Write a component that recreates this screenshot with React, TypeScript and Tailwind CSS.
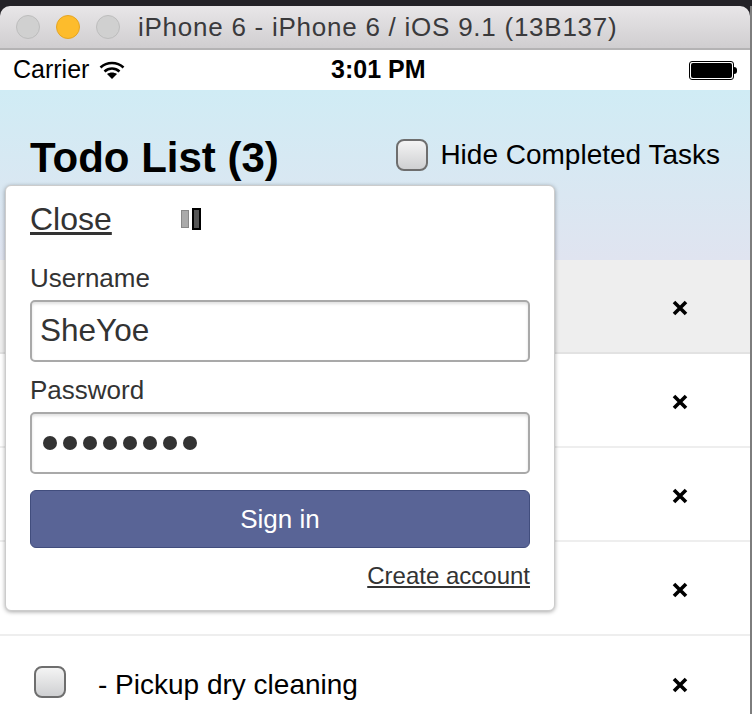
import React from 'react';

const Check: React.FC<{ className?: string }> = ({ className }) => (
  <span className={`block w-8 h-8 rounded-lg border-2 border-[#6e6e6e] bg-gradient-to-b from-[#f4f4f4] to-[#cfd0d2] ${className ?? ''}`} />
);

const Cross: React.FC = () => (
  <svg width="16" height="16" viewBox="0 0 16 16" className="block">
    <path d="M2 2 L14 14 M14 2 L2 14" stroke="#000" strokeWidth="3.6" fill="none" />
  </svg>
);

const Row: React.FC<{ label?: string; className?: string }> = ({ label, className }) => (
  <div className={`h-[94px] flex items-center border-b-2 border-[#eeeeee] ${className ?? ''}`}>
    <div className="pl-[34px] w-[98px] shrink-0">
      <Check className="-mt-[2px]" />
    </div>
    <div className="flex-1 mt-[4px] text-[28px] text-black">{label}</div>
    <div className="w-[140px] mt-[4px] flex justify-center shrink-0">
      <Cross />
    </div>
  </div>
);

const Field: React.FC<{ label: string; children: React.ReactNode }> = ({ label, children }) => (
  <div>
    <div className="text-[26px] leading-[28px] text-[#333333]">{label}</div>
    <div className="mt-[8px] h-[62px] rounded-[5px] border-2 border-[#a9a9a9] bg-white shadow-[inset_0_2px_3px_rgba(0,0,0,0.12)] flex items-center pl-[8px] text-[#333333]">
      {children}
    </div>
  </div>
);

export default function App() {
  return (
    <div className="relative w-[752px] h-[714px] overflow-hidden bg-[#7d7d7d] font-['Liberation_Sans',Arial,sans-serif]">
      <div className="h-[6px] bg-[#232227]" />
      <div className="w-[750px]">
        {/* title bar */}
        <div className="bg-[#232227]">
          <div className="h-[44px] rounded-t-[10px] bg-gradient-to-b from-[#e8e6e8] to-[#d0ced0] border-b-2 border-[#b4b3b4] flex items-center pl-4">
            <span className="w-6 h-6 rounded-full bg-[#d0d0d0] border border-[#bdbdbd]" />
            <span className="ml-4 w-6 h-6 rounded-full bg-[#fdbc2c] border border-[#e5a524]" />
            <span className="ml-4 w-6 h-6 rounded-full bg-[#d0d0d0] border border-[#bdbdbd]" />
            <span className="ml-[18px] text-[26px] tracking-[0.75px] text-[#3a3a3c]">iPhone 6 - iPhone 6 / iOS 9.1 (13B137)</span>
          </div>
        </div>

        {/* status bar */}
        <div className="relative h-[40px] bg-white flex items-center pl-[13px]">
          <span className="text-[25px] text-black">Carrier</span>
          <svg width="26" height="20" viewBox="0 0 26 20" className="ml-[10px]">
            <path d="M1.5 7.5 C8 1.5 18 1.5 24.5 7.5" stroke="#000" strokeWidth="2.6" fill="none" />
            <path d="M5.5 11.5 C10 7.5 16 7.5 20.5 11.5" stroke="#000" strokeWidth="2.6" fill="none" />
            <path d="M8 14 C11 12 15 12 18 14 L13 19 Z" fill="#000" />
          </svg>
          <span className="absolute left-[331px] text-[25px] font-bold text-black">3:01 PM</span>
          <div className="ml-auto mr-[13px] flex items-center">
            <span className="w-[45px] h-[19px] rounded-[3px] border border-[#000] p-px bg-white">
              <span className="block h-full rounded-[2px] bg-black" />
            </span>
            <span className="w-[3px] h-[7px] bg-black rounded-r-sm" />
          </div>
        </div>

        {/* page header */}
        <div className="h-[170px] bg-gradient-to-b from-[#d0ecf5] to-[#e0e4f0] flex items-start justify-between pl-[30px] pr-[30px] pt-[43px]">
          <h1 className="text-[42px] leading-[50px] font-bold text-black">Todo List (3)</h1>
          <label className="flex items-center mt-[6px]">
            <Check />
            <span className="ml-[12px] text-[28px] leading-8 text-black">Hide Completed Tasks</span>
          </label>
        </div>

        <Row className="bg-[#eeeeee] !border-[#e2e2e2]" />
        <Row className="bg-white" />
        <Row className="bg-white" />
        <Row className="bg-white" />
        <Row className="bg-white !border-b-0" label="- Pickup dry cleaning" />
      </div>

      {/* sign in popover */}
      <div className="absolute left-[5px] top-[185px] w-[550px] h-[426px] rounded-[6px] bg-white border border-[#cccccc] shadow-[0_1px_4px_rgba(0,0,0,0.35)] px-[24px]">
        <div className="relative h-[60px] pt-[15px]">
          <span className="text-[32px] leading-9 text-[#333333] underline underline-offset-2">Close</span>
          <span className="absolute left-[151px] top-[22px] flex gap-[3px] items-center">
            <span className="block w-[8px] h-[18px] bg-[#aaaaaa] border border-[#888888]" />
            <span className="block w-[9px] h-[22px] bg-[#555555] border-2 border-black" />
          </span>
        </div>
        <div className="mt-[18px]">
          <Field label="Username">
            <span className="text-[31.5px]">SheYoe</span>
          </Field>
        </div>
        <div className="mt-[14px]">
          <Field label="Password">
            <span className="flex gap-[6px] pl-[3px]">
              {[0, 1, 2, 3, 4, 5, 6, 7].map((i) => (
                <span key={i} className="block w-[14px] h-[14px] rounded-full bg-[#333333]" />
              ))}
            </span>
          </Field>
        </div>
        <button className="mt-[16px] w-full h-[58px] rounded-[6px] bg-[#596496] border border-[#414d7d] text-white text-[26px]">
          Sign in
        </button>
        <div className="mt-[14px] text-right text-[24px] leading-[28px] text-[#333333] underline">Create account</div>
      </div>
    </div>
  );
}
